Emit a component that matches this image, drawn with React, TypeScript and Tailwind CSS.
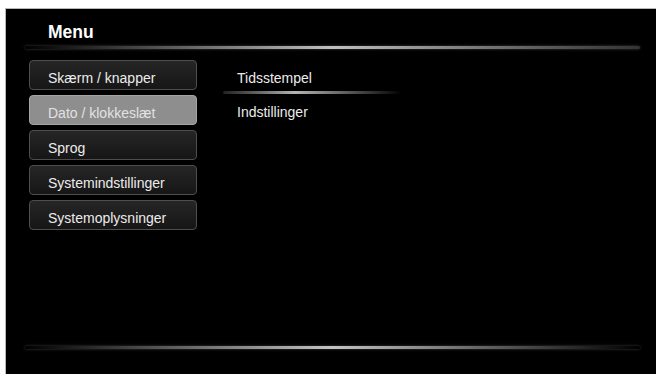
import React from 'react';

const items = ['Skærm / knapper', 'Dato / klokkeslæt', 'Sprog', 'Systemindstillinger', 'Systemoplysninger'];

export default function App() {
  const selected = 1;
  return (
    <div className="w-[656px] h-[376px] bg-white pl-[5px] pt-[8px] pb-[2px] overflow-hidden" style={{ fontFamily: '"Liberation Sans", Arial, sans-serif' }}>
      <div className="h-full bg-black border-l border-t border-[#b8b8b8] flex flex-col">
        {/* titel */}
        <div className="pl-[42px] pt-[13px] text-[17.5px] leading-[21px] font-bold text-white">Menu</div>
        <div className="ml-[19px] mt-[3px] w-[615px] h-[3px] rounded-full bg-linear-to-r from-transparent via-[#bfbfbf] to-[#333] shadow-[0_0_3px_rgba(180,180,180,0.35)]" />

        <div className="flex mt-[11px]">
          {/* venstre menu */}
          <div className="ml-[23px] w-[168px] flex flex-col gap-[5px]">
            {items.map((t, i) => (
              <div
                key={t}
                className={`h-[30px] box-border rounded-[4px] border pl-[18px] pt-[5px] text-[14px] leading-[24px] ${
                  i === selected
                    ? 'bg-[#8e8e8e] border-[#a4a4a4] text-[#e2e2e2]'
                    : 'bg-linear-to-b from-[#262626] to-[#161616] border-[#4e4e4e] text-[#ececec]'
                }`}
              >
                {t}
              </div>
            ))}
          </div>

          {/* højre kolonne */}
          <div className="ml-[40px] flex flex-col text-[14px] leading-[24px] text-[#ececec]">
            <div className="mt-[6px]">Tidsstempel</div>
            <div className="ml-[-14px] mt-[1px] w-[179px] h-[3px] rounded-full bg-linear-to-r from-[#222] via-[#b4b4b4] via-40% to-transparent" />
            <div className="mt-[6px]">Indstillinger</div>
          </div>
        </div>

        <div className="mt-auto mb-[25px] ml-[19px] w-[615px] h-[3px] rounded-full bg-linear-to-r from-transparent via-[#c4c4c4] to-transparent shadow-[0_0_3px_rgba(180,180,180,0.35)]" />
      </div>
    </div>
  );
}
